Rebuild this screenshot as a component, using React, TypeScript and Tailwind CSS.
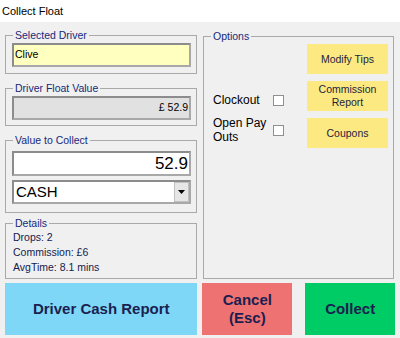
import React from 'react';

const FONT = { fontFamily: '"Liberation Sans", Arial, sans-serif' };

interface GroupBoxProps {
  label: string;
  className?: string;
  children?: React.ReactNode;
}

function GroupBox({ label, className = '', children }: GroupBoxProps) {
  return (
    <div className={`relative border border-[#a9a9a9] ${className}`}>
      <span className="absolute -top-[7px] left-[7px] bg-[#f0f0f0] px-[2px] text-[10.5px] leading-[12px] text-[#16297a]">
        {label}
      </span>
      {children}
    </div>
  );
}

const sunken =
  'border-2 border-t-[#8c8c8c] border-l-[#8c8c8c] border-r-[#a8a8a8] border-b-[#a8a8a8]';

function Checkbox() {
  return <div className="w-[11px] h-[11px] bg-white border border-[#8f8f8f] flex-shrink-0" />;
}

function TipButton({ children }: { children: React.ReactNode }) {
  return (
    <button className="w-[81px] h-[30px] bg-[#fde982] text-[10.5px] leading-[13px] text-[#1e2340] flex flex-col items-center justify-center">
      {children}
    </button>
  );
}

export default function App() {
  return (
    <div className="w-[400px] h-[338px] bg-[#f0f0f0] overflow-hidden text-black" style={FONT}>
      {/* Title */}
      <div className="h-[22px] bg-white flex items-center pl-[2px] text-[11px]">Collect Float</div>

      <div className="flex px-[5px] pt-[13px] gap-[6px]">
        {/* Left column */}
        <div className="w-[192px] flex flex-col">
          <GroupBox label="Selected Driver" className="h-[39px] pt-[7px] pl-[6px] pr-[5px]">
            <div className={`h-[24px] bg-[#ffffc0] ${sunken} flex items-center pl-[1px] text-[10.5px]`}>Clive</div>
          </GroupBox>

          <GroupBox label="Driver Float Value" className="mt-[14px] h-[38px] pt-[7px] pl-[6px] pr-[5px]">
            <div className={`h-[24px] bg-[#e1e1e1] ${sunken} flex items-center justify-end pr-[1px] text-[10.5px]`}>
              £ 52.9
            </div>
          </GroupBox>

          <GroupBox label="Value to Collect" className="mt-[14px] h-[73px] pt-[10px] pl-[6px] pr-[5px]">
            <div className={`h-[25px] bg-white ${sunken} flex items-center justify-end pr-[1px] text-[17px]`}>
              52.9
            </div>
            <div className={`mt-[4px] h-[24px] bg-white ${sunken} flex items-center justify-between`}>
              <span className="pl-[2px] text-[15px]">CASH</span>
              <div className="w-[15px] h-[20px] bg-[#e6e6e6] border border-[#c0c0c0] flex items-center justify-center">
                <svg width="7" height="4" viewBox="0 0 7 4">
                  <path d="M0 0h7L3.5 4z" fill="#000" />
                </svg>
              </div>
            </div>
          </GroupBox>

          <GroupBox label="Details" className="mt-[10px] h-[56px] pt-[6px] pl-[7px]">
            <div className="text-[10.5px] leading-[15px] text-[#14204f]">
              <div>Drops: 2</div>
              <div>Commission: £6</div>
              <div>AvgTime: 8.1 mins</div>
            </div>
          </GroupBox>
        </div>

        {/* Right column */}
        <GroupBox label="Options" className="mt-[1px] w-[191px] h-[243px] pt-[7px] pl-[9px] pr-[5px]">
          <div className="flex justify-between">
            <div className="flex flex-col pt-[49px] gap-[9px] text-[12px] leading-[14px]">
              <div className="flex items-center">
                <span className="w-[60px]">Clockout</span>
                <Checkbox />
              </div>
              <div className="flex items-center">
                <span className="w-[60px]">
                  Open Pay
                  <br />
                  Outs
                </span>
                <Checkbox />
              </div>
            </div>
            <div className="flex flex-col gap-[7px]">
              <TipButton>Modify Tips</TipButton>
              <TipButton>
                <span>Commission</span>
                <span>Report</span>
              </TipButton>
              <TipButton>Coupons</TipButton>
            </div>
          </div>
        </GroupBox>
      </div>

      {/* Action buttons */}
      <div className="flex px-[5px] mt-[4px] text-[15px] font-bold text-[#1a1f4f]">
        <button className="w-[193px] h-[52px] bg-[#7fd7f8]">Driver Cash Report</button>
        <button className="ml-[5px] w-[90px] h-[52px] bg-[#ee7272] leading-[18px]">
          Cancel
          <br />
          (Esc)
        </button>
        <button className="ml-[13px] w-[90px] h-[52px] bg-[#00cc66]">Collect</button>
      </div>
    </div>
  );
}
